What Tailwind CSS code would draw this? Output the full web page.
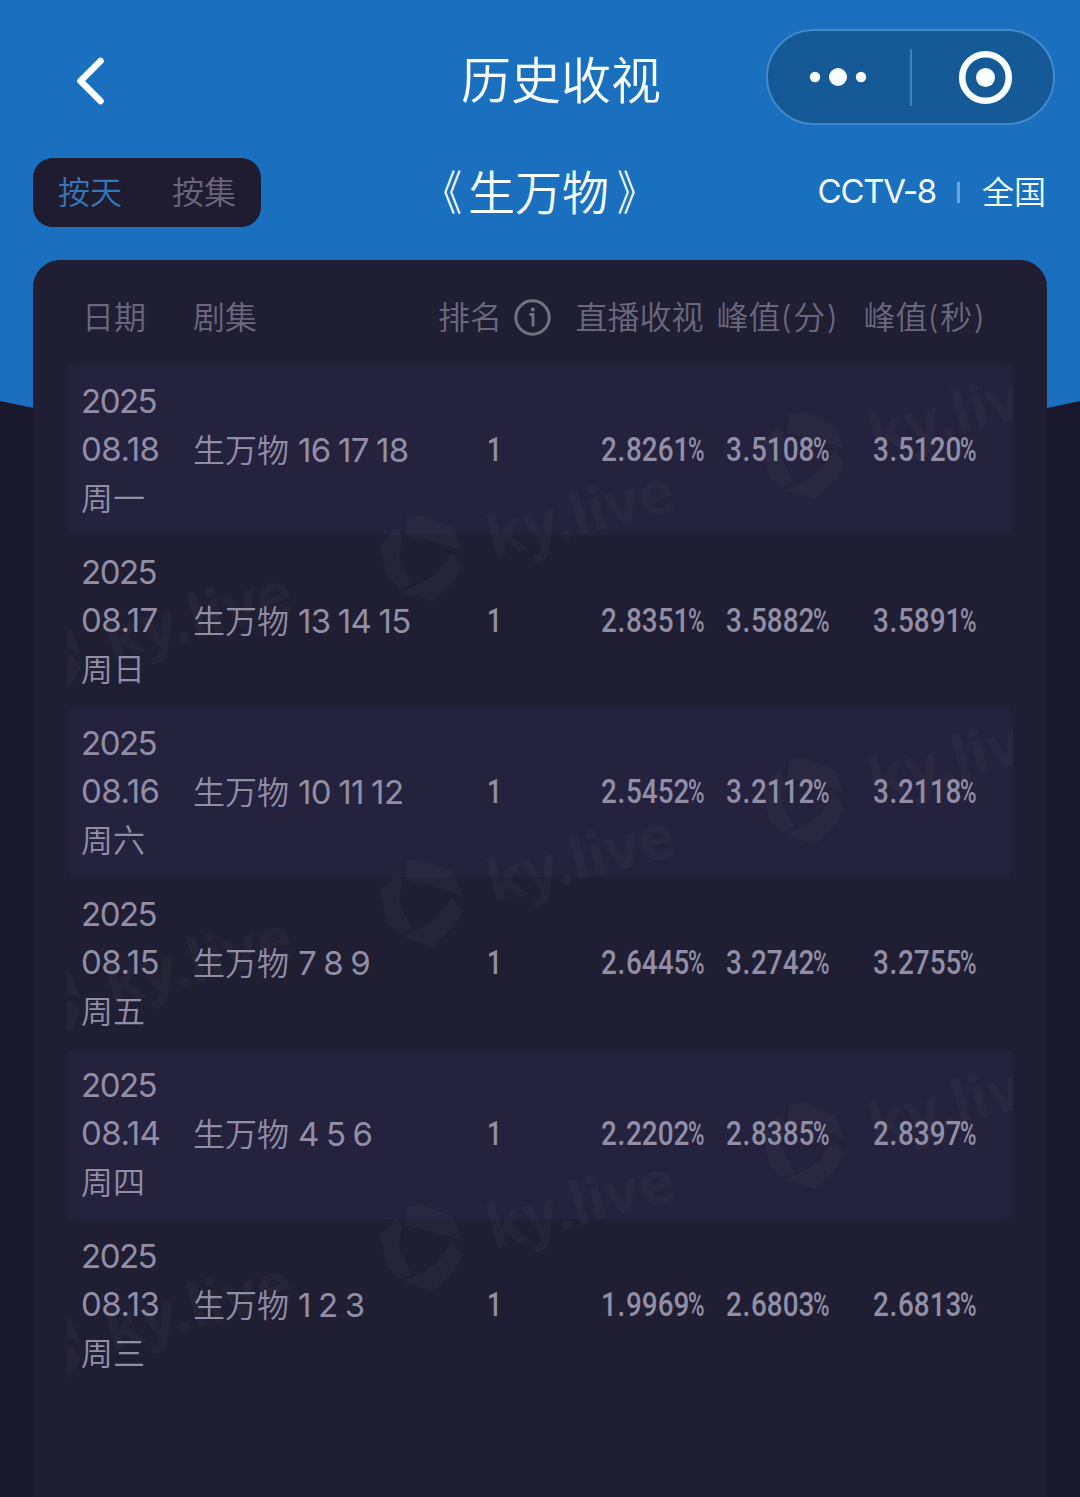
<!DOCTYPE html>
<html lang="zh-CN">
<head>
<meta charset="utf-8">
<title>历史收视</title>
<script src="https://cdn.jsdelivr.net/npm/@tailwindcss/browser@4"></script>
</head>
<body class="relative h-[1497px] w-[1080px] overflow-hidden bg-[#18172b] font-[Inter,'Noto_Sans_CJK_SC',sans-serif] text-[32px] font-[350]">
<svg class="absolute left-0 top-0" width="1080" height="440" viewBox="0 0 1080 440"><path d="M0 0H1080V401Q540 520 0 401Z" fill="#1a6fbe"/></svg>

<div class="relative flex h-full flex-col">
  <header class="grid h-[158px] grid-cols-[461px_305px_289px] pt-[29px] text-[#f8fdff]">
    <div class="flex h-[96px] items-center pl-[73px] pt-[7px]">
      <svg width="34" height="52" viewBox="0 0 34 52"><path d="M27.500 6L7.500 26L27.500 46" fill="none" stroke="#f8fdff" stroke-width="6.600" stroke-linecap="round" stroke-linejoin="round"/></svg>
    </div>
    <h1 class="h-[96px] pt-[3px] text-[50px] leading-[99px]">历史收视</h1>
    <div class="h-[96px] rounded-full border-2 border-[#4289c9] bg-[#155997]">
      <svg class="-ml-0.5 -mt-0.5 max-w-none" width="289" height="96" viewBox="766 29 289 96"><g fill="#f8fdff"><circle cx="815" cy="77" r="5.2"/><circle cx="838" cy="77" r="9"/><circle cx="861" cy="77" r="5.2"/><circle cx="985.5" cy="77.500" r="9.500"/></g><path d="M911 49V106" stroke="#3f83bd" stroke-width="2"/><circle cx="985.5" cy="77.500" r="23.300" fill="none" stroke="#f8fdff" stroke-width="6.600"/></svg>
    </div>
  </header>

  <div class="grid h-[102px] grid-cols-[228px_460px_1fr] pl-[33px] pr-[34px] text-[#f4fdff]">
    <div class="flex h-[69px] items-center rounded-[20px] bg-[#1f1c31] pl-[25px] leading-[67px]">
      <span class="w-[114px] text-[#3278b9]">按天</span><span class="text-[#6b667b]">按集</span>
    </div>
    <h2 class="flex h-[69px] pl-[161px] pt-px text-[47px] leading-[67px]"><span class="w-[46px] origin-right -translate-x-[7px] scale-x-[.8]">《</span><span>生万物</span><span class="origin-left translate-x-[8px] scale-x-[.8]">》</span></h2>
    <div class="flex h-[69px] items-center justify-end whitespace-nowrap leading-[67px]">
      <span class="-mt-[2px] text-[33px] font-normal tracking-[-1.3px]">CCTV-8</span><span class="ml-[21px] mr-[22px] h-[21px] w-[3px] bg-[#69a6e0]"></span><span>全国</span>
    </div>
  </div>

  <main class="mx-[33px] flex-1 rounded-t-[27px] bg-[#201e32] px-[34px]">
    <div class="grid h-[105px] grid-cols-[112px_228px_147px_143px_134px_160px] items-start whitespace-nowrap pl-[14px] pt-[34px] leading-[48px] text-[#6b687e]">
      <span class="pl-[1px]">日期</span><span>剧集</span>
      <span class="flex h-[48px] items-center justify-center gap-[12px]">排名
        <svg class="-mt-[2px]" width="37" height="37" viewBox="0 0 37 37" fill="none" stroke="#747280"><circle cx="18.500" cy="18.500" r="16.700" stroke-width="3"/><path d="M15.500 15.500H19V27.500" stroke-width="2.800"/><path d="M17 10.500H20.500" stroke-width="3.500"/></svg>
      </span>
      <span class="text-center">直播收视</span><span class="text-center">峰值<span class="tracking-[1.5px]">(分)</span></span><span class="text-center">峰值<span class="tracking-[1.5px]">(秒)</span></span>
    </div>
    <div class="relative h-[1026px] overflow-hidden">
      <svg class="pointer-events-none absolute left-0 top-0 z-10" width="947" height="1026" viewBox="67 365 947 1026">
        <defs>
          <g id="mark" fill="#8d8790" fill-opacity=".06">
            <path d="M-14-42L2-43L32-31L41-7L29-12L-16-23ZM-24-31L-41-12L-34 19L-21 31L-9 26L-22 1L-19-22ZM31-6L42 8L32 24L12 43L-19 34L2 24L17 14Z"/>
            <text transform="translate(72 1) rotate(-15)" font-family="Noto Sans" font-weight="700" font-size="60" textLength="192">ky.live</text>
          </g>
        </defs>
        <use href="#mark" x="39" y="660"/><use href="#mark" x="421" y="558"/><use href="#mark" x="803" y="456"/>
        <use href="#mark" x="39" y="1005"/><use href="#mark" x="421" y="903"/><use href="#mark" x="803" y="801"/>
        <use href="#mark" x="39" y="1350"/><use href="#mark" x="421" y="1248"/><use href="#mark" x="803" y="1146"/>
      </svg>
      <div id="rows" class="text-[#918ea6]"></div>
    </div>
  </main>
</div>

<script>
const data = [
  ['08.18', '周一', '16 17 18', '2.8261', '3.5108', '3.5120'],
  ['08.17', '周日', '13 14 15', '2.8351', '3.5882', '3.5891'],
  ['08.16', '周六', '10 11 12', '2.5452', '3.2112', '3.2118'],
  ['08.15', '周五', '7 8 9', '2.6445', '3.2742', '3.2755'],
  ['08.14', '周四', '4 5 6', '2.2202', '2.8385', '2.8397'],
  ['08.13', '周三', '1 2 3', '1.9969', '2.6803', '2.6813']
];
const pct = v => `<span class="inline-flex w-[104px] whitespace-nowrap text-left font-[Roboto] text-[33px] font-medium"><span class="w-[87px] origin-left scale-x-[.845]">${v[0]}<span class="mx-[0.8px]">.</span>${v.slice(2)}</span><span class="w-[17px] origin-left scale-x-[.68]">%</span></span>`;
document.getElementById('rows').innerHTML = data.map((r, i) => `
<div class="mb-px grid h-[170px] grid-cols-[112px_228px_147px_143px_134px_160px] items-center whitespace-nowrap rounded-[8px] pl-[14px] leading-[48px] ${i % 2 ? '' : 'bg-[#25223d]'}">
  <div class="-mt-[1px] h-[145px] text-[33px] leading-[48.3px]"><div class="font-normal tracking-[-1.5px]">2025</div><div class="font-normal tracking-[-0.5px]">${r[0]}</div><div class="pt-px text-[32px]">${r[1]}</div></div>
  <div>生万物 <span class="text-[33px] font-normal tracking-[-0.6px] [word-spacing:-1.5px]">${r[2]}</span></div>
  <div class="-mt-[1px] text-center font-[Roboto] text-[33px] font-medium"><span class="inline-block scale-x-[.8]">1</span></div>
  <div class="-mt-[1px] pr-[6px] text-right">${pct(r[3])}</div>
  <div class="-mt-[1px] text-center">${pct(r[4])}</div>
  <div class="-mt-[1px] text-center">${pct(r[5])}</div>
</div>`).join('');
</script>
</body>
</html>
